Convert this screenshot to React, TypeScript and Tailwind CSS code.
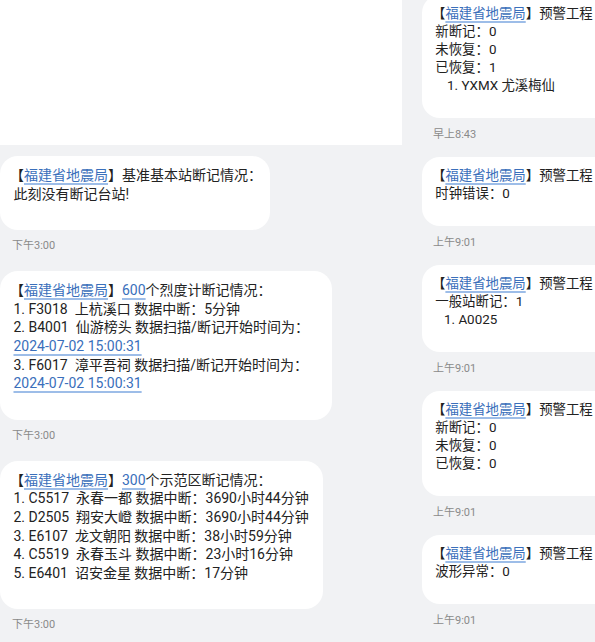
import React from "react";

const FONT = {
  fontFamily: 'Roboto, "Noto Sans CJK SC", sans-serif',
};

function Org() {
  return (
    <>
      【
      <span className="text-[#3a6fbb] underline decoration-[#9dbde8] decoration-[1.5px] underline-offset-[3px]">
        福建省地震局
      </span>
      】
    </>
  );
}

function Link({ children }: { children: React.ReactNode }) {
  return (
    <span className="text-[#3a6fbb] underline decoration-[#9dbde8] decoration-[1.5px] underline-offset-[3px]">
      {children}
    </span>
  );
}

function LeftBubble({ width, children }: { width: string; children: React.ReactNode }) {
  return (
    <div className={`${width} whitespace-nowrap rounded-[18px] bg-white pl-[10px] pt-[10px] pb-[27px] text-[14px] leading-[18.6px] text-[#222]`}>
      {children}
    </div>
  );
}

function RightBubble({ children, first }: { children: React.ReactNode; first?: boolean }) {
  return (
    <div
      className={`w-[200px] whitespace-nowrap rounded-[18px] bg-white pl-[10px] pt-[10px] pb-[23px] text-[13.4px] leading-[18px] text-[#222] ${
        first ? "-mt-[5px]" : ""
      }`}
    >
      {children}
    </div>
  );
}

function Time({ text, left }: { text: string; left?: boolean }) {
  return (
    <div
      className={`flex h-[14px] items-center text-[11px] text-[#8a8a8a] ${
        left ? "mt-[9px] mb-[18px] pl-3" : "mt-[10px] mb-[15px] pl-[11px]"
      }`}
    >
      {text}
    </div>
  );
}

export default function App() {
  return (
    <div className="flex h-[642px] w-[595px] overflow-hidden bg-[#f1f2f4]" style={FONT}>
      {/* left screen */}
      <div className="w-[402px] shrink-0">
        <div className="h-[145px] bg-white" />
        <div className="pt-[11px]">
          <LeftBubble width="w-[270px]">
            <div>
              <Org />
              基准基本站断记情况：
            </div>
            <div>&nbsp;此刻没有断记台站!</div>
          </LeftBubble>
          <Time text="下午3:00" left />

          <LeftBubble width="w-[332px]">
            <div>
              <Org />
              <Link>600</Link>个烈度计断记情况：
            </div>
            <div>&nbsp;1. F3018&nbsp;&nbsp;上杭溪口 数据中断：5分钟</div>
            <div>&nbsp;2. B4001&nbsp;&nbsp;仙游榜头 数据扫描/断记开始时间为：</div>
            <div>
              &nbsp;<Link>2024-07-02 15:00:31</Link>
            </div>
            <div>&nbsp;3. F6017&nbsp;&nbsp;漳平吾祠 数据扫描/断记开始时间为：</div>
            <div>
              &nbsp;<Link>2024-07-02 15:00:31</Link>
            </div>
          </LeftBubble>
          <Time text="下午3:00" left />

          <LeftBubble width="w-[323px]">
            <div>
              <Org />
              <Link>300</Link>个示范区断记情况：
            </div>
            <div>&nbsp;1. C5517&nbsp;&nbsp;永春一都 数据中断：3690小时44分钟</div>
            <div>&nbsp;2. D2505&nbsp;&nbsp;翔安大嶝 数据中断：3690小时44分钟</div>
            <div>&nbsp;3. E6107&nbsp;&nbsp;龙文朝阳 数据中断：38小时59分钟</div>
            <div>&nbsp;4. C5519&nbsp;&nbsp;永春玉斗 数据中断：23小时16分钟</div>
            <div>&nbsp;5. E6401&nbsp;&nbsp;诏安金星 数据中断：17分钟</div>
          </LeftBubble>
          <Time text="下午3:00" left />
        </div>
      </div>

      {/* right screen */}
      <div className="flex-1 overflow-hidden pl-[20px]">
        <RightBubble first>
          <div>
            <Org />
            预警工程
          </div>
          <div>&nbsp;新断记：0</div>
          <div>&nbsp;未恢复：0</div>
          <div>&nbsp;已恢复：1</div>
          <div className="pl-[15px]">1. YXMX 尤溪梅仙</div>
        </RightBubble>
        <Time text="早上8:43" />

        <RightBubble>
          <div>
            <Org />
            预警工程
          </div>
          <div>&nbsp;时钟错误：0</div>
        </RightBubble>
        <Time text="上午9:01" />

        <RightBubble>
          <div>
            <Org />
            预警工程
          </div>
          <div>&nbsp;一般站断记：1</div>
          <div className="pl-[12px]">1. A0025</div>
        </RightBubble>
        <Time text="上午9:01" />

        <RightBubble>
          <div>
            <Org />
            预警工程
          </div>
          <div>&nbsp;新断记：0</div>
          <div>&nbsp;未恢复：0</div>
          <div>&nbsp;已恢复：0</div>
        </RightBubble>
        <Time text="上午9:01" />

        <RightBubble>
          <div>
            <Org />
            预警工程
          </div>
          <div>&nbsp;波形异常：0</div>
        </RightBubble>
        <Time text="上午9:01" />
      </div>
    </div>
  );
}
